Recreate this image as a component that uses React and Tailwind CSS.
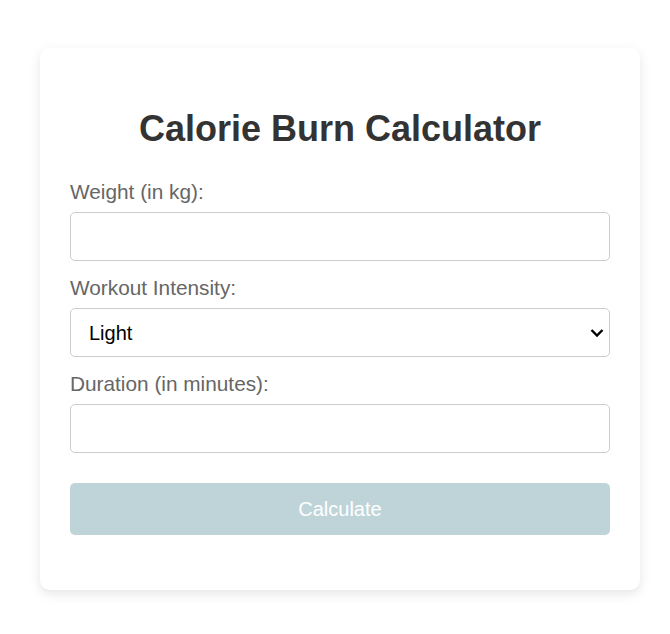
import React, { useState } from "react";

const App = () => {
  const [weight, setWeight] = useState("");
  const [intensity, setIntensity] = useState("light");
  const [duration, setDuration] = useState("");

  const ready = weight !== "" && duration !== "";

  return (
    <div className="min-h-screen bg-white pt-[48px] font-['Liberation_Sans',Arial,sans-serif]">
      <div className="ml-[40px] w-[600px] rounded-[10px] bg-white px-[30px] pt-[60px] pb-[55px] shadow-[0_4px_12px_rgba(0,0,0,0.1)]">
        <h1 className="mb-[31px] text-center text-[36px] font-bold leading-[41px] text-[#333]">
          Calorie Burn Calculator
        </h1>

        <div className="flex flex-col">
          <label className="mb-2 block text-[20.8px] leading-[24px] text-[#666]">Weight (in kg):</label>
          <input
            type="number"
            value={weight}
            onChange={(e) => setWeight(e.target.value)}
            className="mb-[15px] h-[49px] w-full rounded-[5px] border border-[#ccc] px-[15px] text-[20px] text-black outline-none"
          />

          <label className="mb-2 block text-[20.8px] leading-[24px] text-[#666]">Workout Intensity:</label>
          <div className="relative mb-[15px]">
            <select
              value={intensity}
              onChange={(e) => setIntensity(e.target.value)}
              className="h-[49px] w-full appearance-none rounded-[5px] border border-[#ccc] bg-white pl-[18px] pr-[40px] text-[20px] text-black outline-none"
            >
              <option value="light">Light</option>
              <option value="moderate">Moderate</option>
              <option value="intense">Intense</option>
            </select>
            <svg
              className="pointer-events-none absolute right-[6px] top-1/2 -translate-y-1/2"
              width="14"
              height="9"
              viewBox="0 0 14 9"
              fill="none"
            >
              <path d="M1.5 1.5 L7 7 L12.5 1.5" stroke="#000" strokeWidth="2.4" />
            </svg>
          </div>

          <label className="mb-2 block text-[20.8px] leading-[24px] text-[#666]">Duration (in minutes):</label>
          <input
            type="number"
            value={duration}
            onChange={(e) => setDuration(e.target.value)}
            className="h-[49px] w-full rounded-[5px] border border-[#ccc] px-[15px] text-[20px] text-black outline-none"
          />

          <button
            disabled={!ready}
            className="mt-[30px] h-[52px] w-full rounded-[5px] bg-[#bed4d9] text-[20px] text-white"
          >
            Calculate
          </button>
        </div>
      </div>
    </div>
  );
};

export default App;
